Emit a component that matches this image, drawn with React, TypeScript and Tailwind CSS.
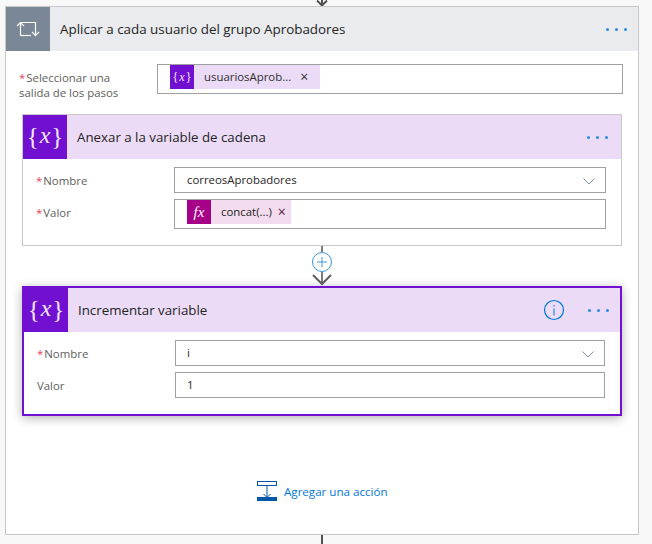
const font = "font-['Open_Sans','Noto_Sans',sans-serif]";

function Dots({ className = "" }: { className?: string }) {
  return (
    <div className={`flex gap-[6px] ${className}`}>
      <span className="w-[3px] h-[3px] rounded-full bg-[#2a8ae0]" />
      <span className="w-[3px] h-[3px] rounded-full bg-[#2a8ae0]" />
      <span className="w-[3px] h-[3px] rounded-full bg-[#2a8ae0]" />
    </div>
  );
}

function VarIcon() {
  return (
    <div className="w-[44px] h-[44px] shrink-0 bg-[#7210d2] flex items-center justify-center text-[#f3e9fb] font-['Liberation_Serif',serif] leading-none">
      <span className="text-[25px] -mt-[2px]">{"{"}</span>
      <span className="italic mx-[1px] text-[24px] -mt-[4px]">x</span>
      <span className="text-[25px] -mt-[2px]">{"}"}</span>
    </div>
  );
}

function Chevron() {
  return (
    <svg width="12" height="7" viewBox="0 0 12 7" fill="none" className="ml-auto mr-[10px] mt-[2px]">
      <path d="M0.500 0.500l5.500 5.500 5.500-5.500" stroke="#7f8ea3" strokeWidth="1" />
    </svg>
  );
}

function Req() {
  return <span className="text-[#e3445f] mr-[1px]">*</span>;
}

function Field({ label, required, children, input }: { label: string; required?: boolean; children: React.ReactNode; input: string }) {
  return (
    <div className="flex items-start">
      <div className="w-[151px] pl-[13px] text-[11.4px] text-[#605e5c] pt-[4px] leading-[20px] shrink-0">
        {required && <Req />}
        {label}
      </div>
      <div className={`flex-1 border border-[#a0a0a0] flex items-center bg-white ${input}`}>{children}</div>
    </div>
  );
}

function LoopIcon() {
  return (
    <svg width="44" height="44" viewBox="0 0 44 44" fill="none" stroke="white" strokeWidth="1.200">
      <path d="M14.500 28.500V15.500H29.500V28.500" />
      <path d="M14.500 28.500H25" />
      <path d="M11 19l3.500-3.500 3.500 3.500" />
      <path d="M26 25l3.500 3.500 3.500-3.500" />
    </svg>
  );
}

export default function App() {
  return (
    <div className={`w-[652px] h-[544px] overflow-hidden bg-[#f8f8f8] text-[#252423] ${font}`}>
      {/* arrow coming in from the previous step */}
      <div className="h-[6px] flex justify-center w-[644px] overflow-hidden">
        <svg width="14" height="6" viewBox="0 0 14 6" fill="none">
          <path d="M2 0.500l5 5 5-5M7 0v5" stroke="#505050" strokeWidth="2" />
        </svg>
      </div>

      <div className="ml-[5px] w-[634px] h-[529px] border border-[#c8c8c8] bg-white flex flex-col">
        <div className="h-[44px] flex items-center bg-[#e9ebee] shrink-0">
          <div className="w-[44px] h-[44px] bg-[#7a8796]">
            <LoopIcon />
          </div>
          <div className="ml-[10px] text-[13.4px] text-[#252423]">Aplicar a cada usuario del grupo Aprobadores</div>
          <Dots className="ml-auto mr-[11px]" />
        </div>

        <div className="flex items-start mt-[13px]">
          <div className="w-[151px] pl-[13px] text-[11.4px] leading-[15px] text-[#605e5c] pt-[6px] shrink-0">
            <Req />
            Seleccionar una
            <br />
            salida de los pasos
          </div>
          <div className="w-[466px] h-[30px] border border-[#a0a0a0] pl-[12px]">
            <div className="h-[24px] w-[150px] bg-[#ebdbf7] flex items-center text-[11.4px]">
              <div className="w-[24px] h-[24px] shrink-0 bg-[#7210d2] text-[#f3e9fb] text-[12px] flex items-center justify-center font-['Liberation_Serif',serif]">
                {"{"}<span className="italic mx-[1px]">x</span>{"}"}
              </div>
              <span className="ml-[10px] text-[#323130]">usuariosAprob...</span>
              <span className="ml-[9px] text-[14px] leading-none text-[#323130]">×</span>
            </div>
          </div>
        </div>

        <div className="ml-[16px] mt-[14px] w-[600px] h-[132px] border border-[#c8c8c8] flex flex-col shrink-0">
          <div className="h-[44px] bg-[#ebdbf7] flex items-center shrink-0">
            <VarIcon />
            <div className="ml-[10px] pt-[1px] text-[13.3px]">Anexar a la variable de cadena</div>
            <Dots className="ml-auto mr-[13px]" />
          </div>
          <div className="mt-[8px] flex flex-col gap-[6px] pr-[15px]">
            <Field label="Nombre" required input="h-[26px] pl-[12px] text-[11.4px]">
              <span>correosAprobadores</span>
              <Chevron />
            </Field>
            <Field label="Valor" required input="h-[30px] pl-[12px]">
              <div className="h-[24px] w-[104px] -mt-[4px] bg-[#f2dcee] flex items-center text-[11.4px]">
                <div className="w-[24px] h-[24px] shrink-0 bg-[#a70088] text-white text-[15px] italic flex items-center justify-center font-['Liberation_Serif',serif]">
                  fx
                </div>
                <span className="ml-[10px]">concat(...)</span>
                <span className="ml-[6px] text-[14px] leading-none text-[#5a2048]">×</span>
              </div>
            </Field>
          </div>
        </div>

        {/* connector between the two actions */}
        <div className="h-[40px] w-[632px] flex justify-center shrink-0">
          <svg width="24" height="40" viewBox="0 0 24 40" fill="none">
            <path d="M12 0v6" stroke="#505050" strokeWidth="1.500" />
            <circle cx="12" cy="16" r="9.500" stroke="#3a96dd" strokeWidth="1" fill="white" />
            <path d="M12 11v10M7 16h10" stroke="#3a96dd" strokeWidth="1" />
            <path d="M12 26v11" stroke="#505050" strokeWidth="1.500" />
            <path d="M3 29l9 9 9-9" stroke="#606060" strokeWidth="2" />
          </svg>
        </div>

        <div className="ml-[16px] w-[600px] h-[130px] border-2 border-[#7210d2] flex flex-col shrink-0 shadow-[0_2px_10px_rgba(0,0,0,0.3)]">
          <div className="h-[44px] bg-[#ebdbf7] flex items-center shrink-0">
            <VarIcon />
            <div className="ml-[10px] pt-[1px] text-[13.3px]">Incrementar variable</div>
            <svg width="22" height="22" viewBox="0 0 22 22" fill="none" className="ml-auto mr-[23px]">
              <circle cx="11" cy="11" r="9.500" stroke="#0078d7" strokeWidth="1.200" />
              <path d="M11 9.500v7M11 6v1.500" stroke="#0078d7" strokeWidth="1" />
            </svg>
            <Dots className="mr-[11px] mt-[1px]" />
          </div>
          <div className="mt-[8px] flex flex-col gap-[6px] pr-[15px]">
            <Field label="Nombre" required input="h-[26px] pl-[11px] text-[11.4px]">
              <span>i</span>
              <Chevron />
            </Field>
            <Field label="Valor" input="h-[26px] pl-[11px] text-[11.4px]">
              <span>1</span>
            </Field>
          </div>
        </div>

        <div className="flex items-center ml-[251px] mt-[65px]">
          <svg width="21" height="21" viewBox="0 0 21 21" fill="none">
            <rect x="0.500" y="0.500" width="19" height="4" stroke="#0058a8" />
            <path d="M10 5v11M6.500 13l3.500 3.500 3.500-3.500" stroke="#0058a8" />
            <rect x="0" y="16" width="20" height="4" fill="#0058a8" />
          </svg>
          <span className="ml-[6px] text-[11.6px] text-[#0078d7]">Agregar una acción</span>
        </div>
      </div>

      <div className="h-[9px] w-[644px] flex justify-center">
        <div className="w-[2px] h-[9px] bg-[#505050]" />
      </div>
    </div>
  );
}
